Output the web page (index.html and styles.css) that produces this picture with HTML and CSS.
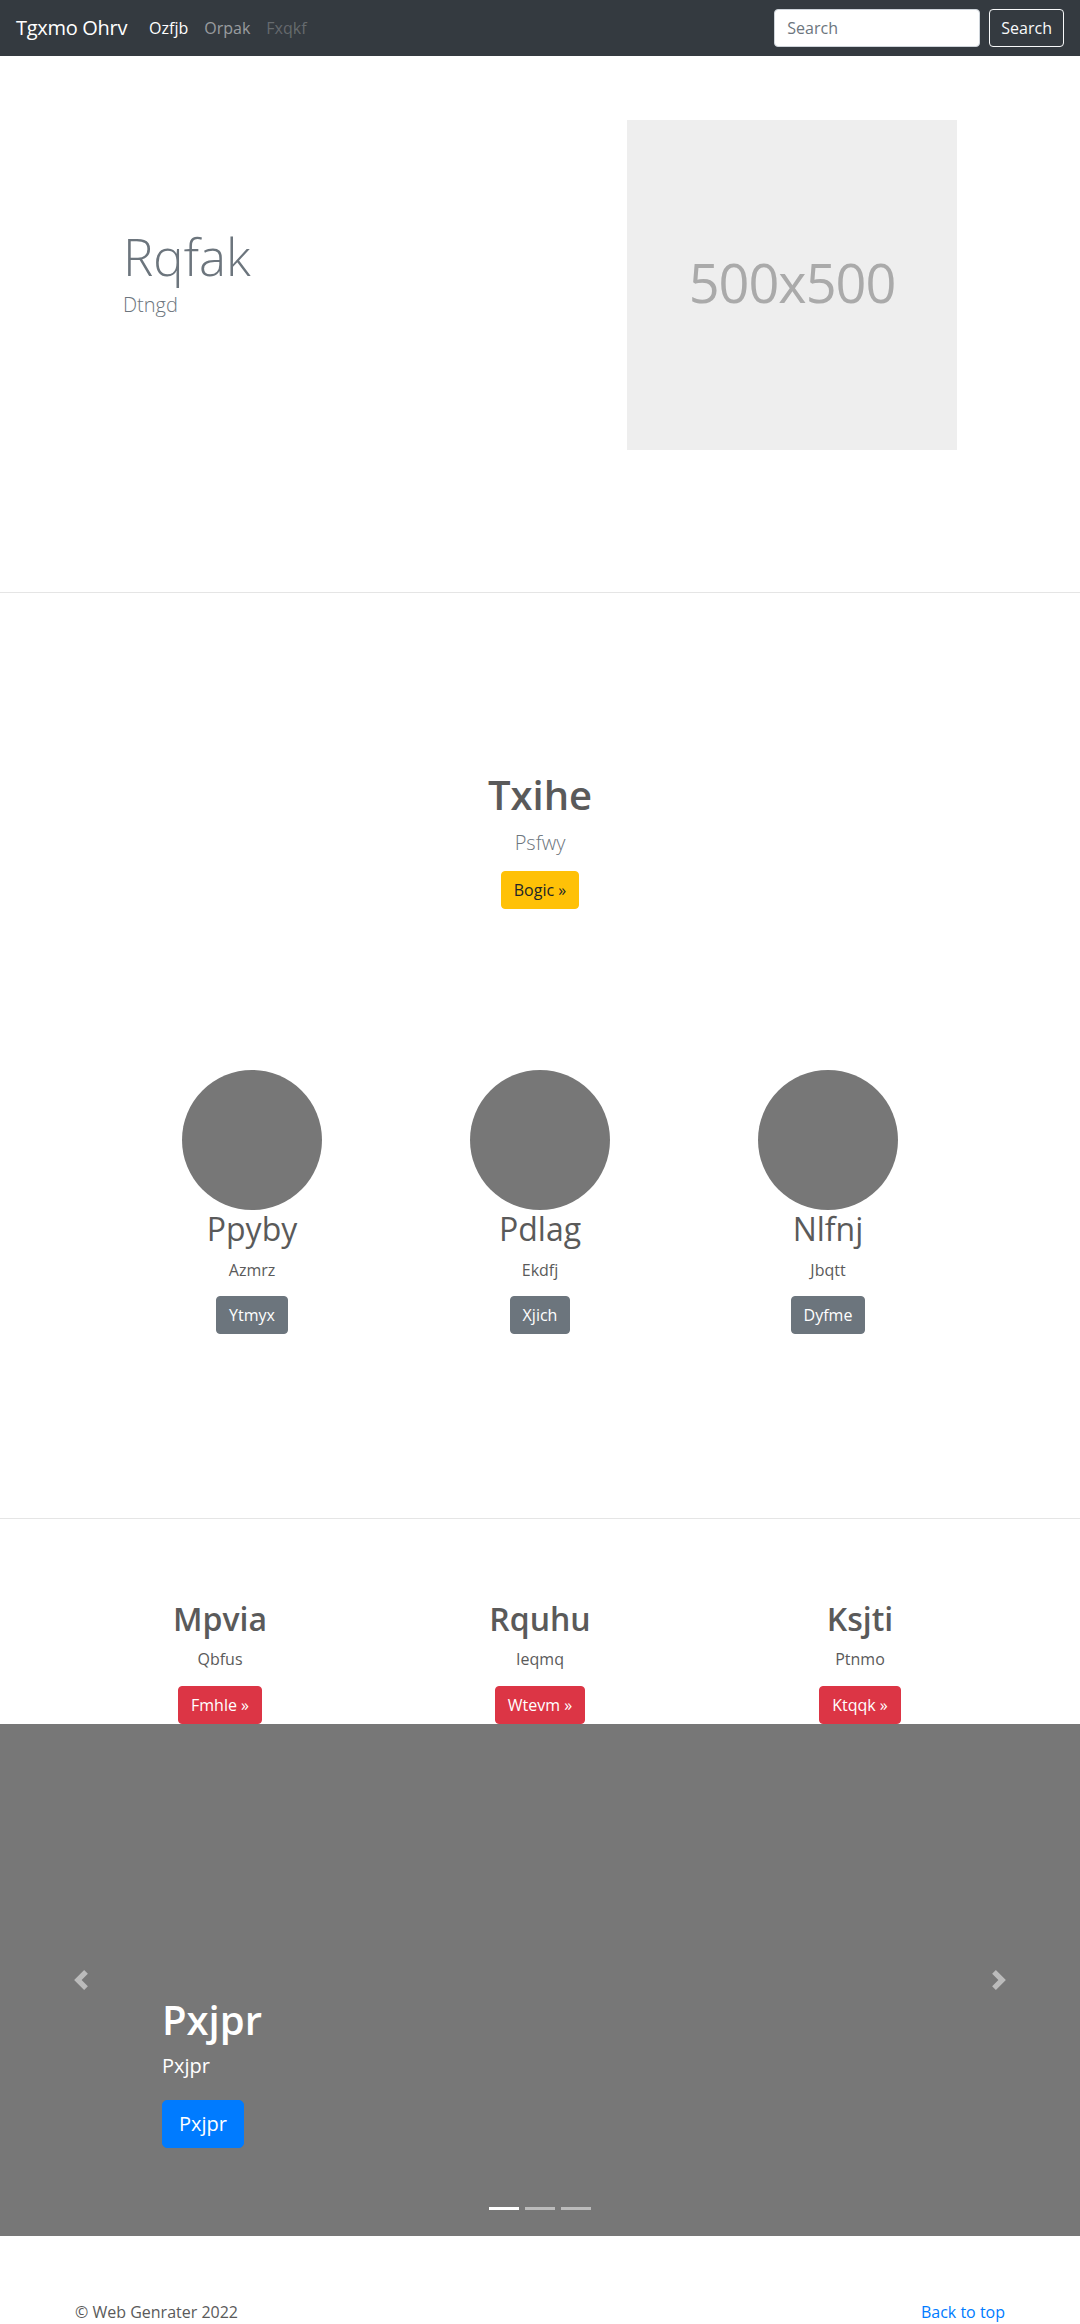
FILE: index.html
```html
<!DOCTYPE html>
<html lang="en">
<head>
<meta charset="utf-8">
<title>Tgxmo Ohrv</title>
<link rel="stylesheet" href="styles.css">
</head>
<body>
<nav class="navbar">
  <a class="brand" href="#">Tgxmo Ohrv</a>
  <ul class="nav-links">
    <li><a class="nav-link active" href="#">Ozfjb</a></li>
    <li><a class="nav-link" href="#">Orpak</a></li>
    <li><a class="nav-link disabled" href="#">Fxqkf</a></li>
  </ul>
  <form class="search">
    <input class="search-input" type="text" placeholder="Search">
    <button class="search-btn" type="button">Search</button>
  </form>
</nav>

<section class="hero">
  <div class="hero-inner">
    <div class="hero-text">
      <h1 class="hero-title">Rqfak</h1>
      <p class="hero-lead">Dtngd</p>
    </div>
    <div class="hero-media">
      <div class="placeholder">500x500</div>
    </div>
  </div>
</section>

<section class="feature">
  <div class="cta">
    <h2 class="cta-title">Txihe</h2>
    <p class="cta-text">Psfwy</p>
    <a class="btn btn-warning" href="#">Bogic &raquo;</a>
  </div>
  <div class="people">
    <div class="person">
      <div class="avatar"></div>
      <h3 class="person-name">Ppyby</h3>
      <p class="person-text">Azmrz</p>
      <a class="btn btn-secondary" href="#">Ytmyx</a>
    </div>
    <div class="person">
      <div class="avatar"></div>
      <h3 class="person-name">Pdlag</h3>
      <p class="person-text">Ekdfj</p>
      <a class="btn btn-secondary" href="#">Xjich</a>
    </div>
    <div class="person">
      <div class="avatar"></div>
      <h3 class="person-name">Nlfnj</h3>
      <p class="person-text">Jbqtt</p>
      <a class="btn btn-secondary" href="#">Dyfme</a>
    </div>
  </div>
</section>

<section class="marketing">
  <div class="mcol">
    <h2 class="mcol-title">Mpvia</h2>
    <p class="mcol-text">Qbfus</p>
    <a class="btn btn-danger" href="#">Fmhle &raquo;</a>
  </div>
  <div class="mcol">
    <h2 class="mcol-title">Rquhu</h2>
    <p class="mcol-text">Ieqmq</p>
    <a class="btn btn-danger" href="#">Wtevm &raquo;</a>
  </div>
  <div class="mcol">
    <h2 class="mcol-title">Ksjti</h2>
    <p class="mcol-text">Ptnmo</p>
    <a class="btn btn-danger" href="#">Ktqqk &raquo;</a>
  </div>
</section>

<div class="carousel">
  <ol class="indicators">
    <li class="active"></li>
    <li></li>
    <li></li>
  </ol>
  <div class="carousel-caption">
    <h2 class="caption-title">Pxjpr</h2>
    <p class="caption-text">Pxjpr</p>
    <div class="caption-action"><a class="btn btn-lg btn-primary" href="#">Pxjpr</a></div>
  </div>
  <a class="control prev" href="#">
    <svg width="20" height="20" viewBox="0 0 8 8" fill="#fff"><path d="M5.25 0l-4 4 4 4 1.5-1.5L4.25 4l2.5-2.5L5.25 0z"/></svg>
  </a>
  <a class="control next" href="#">
    <svg width="20" height="20" viewBox="0 0 8 8" fill="#fff"><path d="M2.75 0l-1.5 1.5L3.75 4l-2.5 2.5L2.75 8l4-4-4-4z"/></svg>
  </a>
</div>

<footer class="footer">
  <p class="copy">&copy; Web Genrater 2022</p>
  <p class="top-link"><a href="#">Back to top</a></p>
</footer>
</body>
</html>
```

FILE: styles.css
```css
* { box-sizing: border-box; }
html, body { margin: 0; padding: 0; }
body {
  font-family: "Open Sans", "Noto Sans", sans-serif;
  font-size: 16px;
  line-height: 1.5;
  color: #5a5a5a;
  background: #fff;
}
a { text-decoration: none; }

/* navbar */
.navbar {
  display: flex;
  align-items: center;
  height: 56px;
  padding: 0 16px;
  background: #343a40;
}
.brand {
  font-size: 20px;
  line-height: 30px;
  color: #fff;
  margin-right: 14px;
  letter-spacing: -0.3px;
  white-space: nowrap;
}
.nav-links {
  display: flex;
  flex: 1;
  list-style: none;
  margin: 0;
  padding: 0;
}
.nav-link {
  display: block;
  padding: 8px;
  color: rgba(255, 255, 255, .5);
}
.nav-link.active { color: #fff; }
.nav-link.disabled { color: rgba(255, 255, 255, .25); }
.search { display: flex; align-items: center; margin: 0; }
.search-input {
  width: 206px;
  height: 38px;
  padding: 6px 12px;
  font-family: inherit;
  font-size: 16px;
  color: #495057;
  background: #fff;
  border: 1px solid #ced4da;
  border-radius: 4px;
  margin-right: 9px;
}
.search-input::placeholder { color: #6c757d; }
.search-btn {
  height: 38px;
  padding: 6px 11px;
  font-family: inherit;
  font-size: 16px;
  line-height: 24px;
  color: #f8f9fa;
  background: transparent;
  border: 1px solid #f8f9fa;
  border-radius: 4px;
}

/* hero */
.hero {
  padding: 64px 0 142px;
  border-bottom: 1px solid #e5e5e5;
}
.hero-inner {
  width: 864px;
  margin: 0 auto;
  display: flex;
  align-items: center;
}
.hero-text { flex: 0 0 504px; padding: 0 15px; }
.hero-title {
  margin: 0 0 2px;
  font-size: 51px;
  font-weight: 350;
  line-height: 1.2;
  color: #6c757d;
}
.hero-lead {
  margin: 0 0 24px;
  font-size: 20px;
  font-weight: 300;
  line-height: 1.5;
  color: #6c757d;
}
.hero-media { flex: 0 0 360px; padding: 0 15px; }
.placeholder {
  width: 330px;
  height: 330px;
  background: #eee;
  color: #aaa;
  display: flex;
  align-items: center;
  justify-content: center;
  padding-bottom: 6px;
  font-size: 54px;
  letter-spacing: -1px;
}

/* buttons */
.btn {
  display: inline-block;
  padding: 6px 12px;
  font-size: 16px;
  line-height: 24px;
  border: 1px solid transparent;
  border-radius: 4px;
  text-align: center;
}
.btn-warning { background: #ffc107; border-color: #ffc107; color: #212529; }
.btn-secondary { background: #6c757d; border-color: #6c757d; color: #fff; }
.btn-danger { background: #dc3545; border-color: #dc3545; color: #fff; }
.btn-primary { background: #007bff; border-color: #007bff; color: #fff; }
.btn-lg { padding: 8px 16px; font-size: 20px; line-height: 30px; border-radius: 5px; }

/* feature */
.feature {
  padding: 178px 0 184px;
  border-bottom: 1px solid #e5e5e5;
  text-align: center;
}
.cta { display: flex; flex-direction: column; align-items: center; }
.cta-title {
  margin: 0 0 9px;
  font-size: 40px;
  font-weight: 600;
  line-height: 1.2;
}
.cta-text {
  margin: 0 0 13px;
  font-size: 20px;
  font-weight: 300;
  color: #6c757d;
}
.people {
  width: 864px;
  margin: 161px auto 0;
  display: flex;
}
.person {
  flex: 1;
  display: flex;
  flex-direction: column;
  align-items: center;
}
.avatar {
  width: 140px;
  height: 140px;
  border-radius: 50%;
  background: #777;
}
.person-name {
  margin: 0 0 10px;
  font-size: 32px;
  font-weight: 400;
  line-height: 1.2;
}
.person-text { margin: 0 0 14px; }

/* marketing */
.marketing {
  width: 960px;
  margin: 0 auto;
  padding-top: 81px;
  display: flex;
}
.mcol {
  flex: 1;
  padding: 0 15px;
  display: flex;
  flex-direction: column;
  align-items: center;
}
.mcol-title {
  margin: 0 0 8px;
  font-size: 32px;
  font-weight: 600;
  line-height: 1.2;
}
.mcol-text { margin: 0 0 15px; }

/* carousel */
.carousel {
  position: relative;
  height: 512px;
  background: #777;
  margin-bottom: 64px;
}
.carousel-caption {
  position: absolute;
  left: 15%;
  right: 15%;
  bottom: 48px;
  padding: 20px 0;
  color: #fff;
  z-index: 2;
}
.caption-title {
  margin: 0 0 8px;
  font-size: 40px;
  font-weight: 600;
  line-height: 1.2;
}
.caption-text {
  margin: 0 0 20px;
  font-size: 20px;
  line-height: 1.4;
}
.caption-action { display: flex; margin-bottom: 20px; }
.control {
  position: absolute;
  top: 0;
  bottom: 0;
  width: 15%;
  display: flex;
  align-items: center;
  justify-content: center;
  opacity: .5;
  z-index: 1;
}
.control.prev { left: 0; }
.control.next { right: 0; }
.indicators {
  position: absolute;
  left: 0;
  right: 0;
  bottom: 0;
  margin: 0 0 16px;
  padding: 0;
  list-style: none;
  display: flex;
  justify-content: center;
  z-index: 3;
}
.indicators li {
  box-sizing: content-box;
  width: 30px;
  height: 3px;
  margin: 0 3px;
  background: #fff;
  background-clip: padding-box;
  border-top: 10px solid transparent;
  border-bottom: 10px solid transparent;
  opacity: .5;
}
.indicators li.active { opacity: 1; }

/* footer */
.footer {
  width: 960px;
  margin: 0 auto;
  padding: 0 15px;
  display: flex;
  justify-content: space-between;
}
.footer p { margin: 0 0 16px; }
.top-link a { color: #007bff; }
```
